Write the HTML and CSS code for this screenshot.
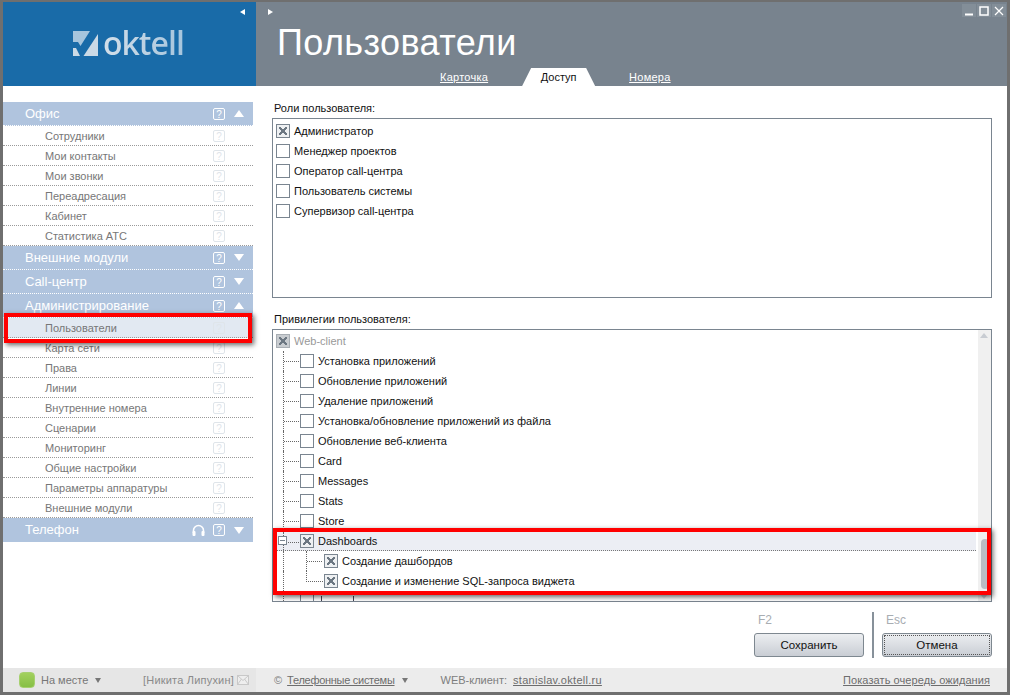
FILE: index.html
```html
<!DOCTYPE html>
<html lang="ru">
<head>
<meta charset="utf-8">
<title>Oktell</title>
<link rel="stylesheet" href="styles.css">
</head>
<body>
<div class="window">
  <div class="columns">
    <aside class="side">
      <div class="brand">
        <span class="collapse-left"></span>
        <div class="logo">
          <svg class="logo-mark" width="25" height="25" viewBox="0 0 25 25">
            <path d="M0 0H17L7.5 15L5 11H0Z" fill="#a6c5dd"/>
            <path d="M25 3V25H10.5Z" fill="#cbdae6"/>
            <path d="M0 17H3L7 25H0Z" fill="#cbdae6"/>
          </svg>
          <span class="logo-text">oktell</span>
        </div>
      </div>
      <nav class="menu">
        <div class="group"><span class="group-name">Офис</span><span class="q">?</span><span class="tri up"></span></div>
        <div class="item"><span class="item-name">Сотрудники</span><span class="q">?</span></div>
        <div class="item"><span class="item-name">Мои контакты</span><span class="q">?</span></div>
        <div class="item"><span class="item-name">Мои звонки</span><span class="q">?</span></div>
        <div class="item"><span class="item-name">Переадресация</span><span class="q">?</span></div>
        <div class="item"><span class="item-name">Кабинет</span><span class="q">?</span></div>
        <div class="item"><span class="item-name">Статистика АТС</span><span class="q">?</span></div>
        <div class="group"><span class="group-name">Внешние модули</span><span class="q">?</span><span class="tri down"></span></div>
        <div class="group"><span class="group-name">Call-центр</span><span class="q">?</span><span class="tri down"></span></div>
        <div class="group"><span class="group-name">Администрирование</span><span class="q">?</span><span class="tri up"></span></div>
        <div class="item active"><span class="item-name">Пользователи</span><span class="q">?</span></div>
        <div class="item"><span class="item-name">Карта сети</span><span class="q">?</span></div>
        <div class="item"><span class="item-name">Права</span><span class="q">?</span></div>
        <div class="item"><span class="item-name">Линии</span><span class="q">?</span></div>
        <div class="item"><span class="item-name">Внутренние номера</span><span class="q">?</span></div>
        <div class="item"><span class="item-name">Сценарии</span><span class="q">?</span></div>
        <div class="item"><span class="item-name">Мониторинг</span><span class="q">?</span></div>
        <div class="item"><span class="item-name">Общие настройки</span><span class="q">?</span></div>
        <div class="item"><span class="item-name">Параметры аппаратуры</span><span class="q">?</span></div>
        <div class="item"><span class="item-name">Внешние модули</span><span class="q">?</span></div>
        <div class="group last"><span class="group-name">Телефон</span>
          <svg class="headset" width="13" height="13" viewBox="0 0 13 13"><path d="M1.5 9V6.5a5 5 0 0 1 10 0V9" fill="none" stroke="#fff" stroke-width="1.6"/><rect x="0.5" y="7" width="3" height="5" rx="1" fill="#fff"/><rect x="9.5" y="7" width="3" height="5" rx="1" fill="#fff"/></svg>
          <span class="q">?</span><span class="tri down"></span></div>
      </nav>
      <div class="side-foot">
        <span class="status-dot"></span>
        <span class="status-name">На месте</span><span class="mini-tri"></span>
        <span class="user">[Никита Липухин]</span>
        <svg class="mail" width="12" height="10" viewBox="0 0 12 10"><rect x="0.5" y="0.5" width="11" height="9" fill="#eee" stroke="#c8c8c8"/><path d="M0.5 0.5L6 5.5L11.5 0.5M0.5 9.5L4.5 4M11.5 9.5L7.5 4" fill="none" stroke="#c8c8c8"/></svg>
      </div>
    </aside>
    <main class="main">
      <header class="head">
        <span class="collapse-right"></span>
        <div class="win-btns">
          <span class="win-btn"><svg width="12" height="12" viewBox="0 0 12 12"><path d="M2 9.5H10" stroke="#fff" stroke-width="2"/></svg></span>
          <span class="win-btn"><svg width="12" height="12" viewBox="0 0 12 12"><rect x="2" y="2" width="8" height="8" fill="none" stroke="#fff" stroke-width="1.5"/></svg></span>
          <span class="win-btn"><svg width="12" height="12" viewBox="0 0 12 12"><path d="M2 2L10 10M10 2L2 10" stroke="#fff" stroke-width="1.2"/></svg></span>
        </div>
        <h1 class="title">Пользователи</h1>
        <div class="tabs">
          <a class="tab">Карточка</a>
          <span class="tab current">Доступ</span>
          <a class="tab">Номера</a>
        </div>
      </header>
      <section class="content">
        <div class="label">Роли пользователя:</div>
        <div class="box roles">
          <div class="row"><span class="cb on"></span>Администратор</div>
          <div class="row"><span class="cb"></span>Менеджер проектов</div>
          <div class="row"><span class="cb"></span>Оператор call-центра</div>
          <div class="row"><span class="cb"></span>Пользователь системы</div>
          <div class="row"><span class="cb"></span>Супервизор call-центра</div>
        </div>
        <div class="label second">Привилегии пользователя:</div>
        <div class="box privs">
          <div class="tree">
            <div class="row root"><span class="cb on dim"></span>Web-client</div>
            <div class="row lvl1"><span class="cb"></span>Установка приложений</div>
            <div class="row lvl1"><span class="cb"></span>Обновление приложений</div>
            <div class="row lvl1"><span class="cb"></span>Удаление приложений</div>
            <div class="row lvl1"><span class="cb"></span>Установка/обновление приложений из файла</div>
            <div class="row lvl1"><span class="cb"></span>Обновление веб-клиента</div>
            <div class="row lvl1"><span class="cb"></span>Card</div>
            <div class="row lvl1"><span class="cb"></span>Messages</div>
            <div class="row lvl1"><span class="cb"></span>Stats</div>
            <div class="row lvl1"><span class="cb"></span>Store</div>
            <div class="row lvl1 selected"><span class="expander"></span><span class="cb on"></span>Dashboards</div>
            <div class="row lvl2"><span class="cb on"></span>Создание дашбордов</div>
            <div class="row lvl2 end"><span class="cb on"></span>Создание и изменение SQL-запроса виджета</div>
            <div class="row lvl1 clipped"><span class="cb"></span><span class="stem first"></span><span class="stem"></span></div>
          </div>
          <div class="scrollbar">
            <span class="arrow-up"></span>
            <span class="thumb"></span>
            <span class="arrow-down"></span>
          </div>
        </div>
        <div class="actions">
          <div class="action"><span class="key">F2</span><button class="btn">Сохранить</button></div>
          <span class="divider"></span>
          <div class="action"><span class="key">Esc</span><button class="btn focus">Отмена</button></div>
        </div>
      </section>
      <footer class="main-foot">
        <span class="copy">©</span>
        <a class="foot-link company">Телефонные системы</a><span class="mini-tri"></span>
        <span class="client">WEB-клиент:</span>
        <a class="foot-link host">stanislav.oktell.ru</a>
        <a class="foot-link queue">Показать очередь ожидания</a>
      </footer>
    </main>
  </div>
  <div class="mark mark-user"></div>
  <div class="mark mark-dash"></div>
</div>
</body>
</html>
```

FILE: styles.css
```css
* { box-sizing: border-box; }
html, body { margin: 0; height: 100%; }
body {
  width: 1010px;
  height: 695px;
  overflow: hidden;
  background: #fff;
  font: 11px/20px "Liberation Sans", Arial, sans-serif;
  color: #111;
}
.window {
  position: relative;
  width: 1010px;
  height: 695px;
  border: solid #6f6f6f;
  border-width: 2px 3px 3px 3px;
  background: #fff;
}
.columns { display: flex; height: 100%; }

/* sidebar */
.side { width: 253px; display: flex; flex-direction: column; }
.brand {
  position: relative;
  height: 84px;
  background: #196ba8;
  display: flex;
  padding: 29px 0 0 70px;
}
.collapse-left, .collapse-right {
  position: absolute;
  top: 7px;
  width: 0;
  height: 0;
  border-style: solid;
  border-color: transparent;
  border-width: 3.5px 0;
}
.collapse-left { right: 11px; border-right: 5px solid #fff; }
.collapse-right { left: 12px; border-left: 5px solid #fff; }
.logo { display: flex; align-items: center; height: 25px; gap: 5px; }
.logo-mark { flex: none; }
.logo-text {
  font: 600 32px/25px "Open Sans", sans-serif;
  letter-spacing: -1px;
  background: linear-gradient(90deg, #d3dfe9, #a6c5dd);
  -webkit-background-clip: text;
  background-clip: text;
  color: transparent;
  padding-bottom: 2px;
}
.menu { flex: 1; padding-top: 16px; width: 250px; }
.group, .item {
  display: flex;
  align-items: center;
  padding-right: 9px;
}
.group {
  height: 24px;
  background: #b0c4de;
  color: #fff;
  font-size: 13px;
  padding-left: 22px;
  border-bottom: 1px dotted #fff;
}
.group.last { border-bottom: 0; }
.group-name { flex: 1; }
.item {
  height: 20px;
  padding-left: 42px;
  color: #777;
  border-bottom: 1px dotted #9a9a9a;
  padding-right: 28px;
}
.item.active { background: #e2e9f2; }
.item-name { flex: 1; }
.q {
  width: 12px;
  height: 12px;
  border: 1px solid #fff;
  border-radius: 2px;
  color: #fff;
  font: 10px/11px "Liberation Sans", sans-serif;
  text-align: center;
}
.item .q { border-color: #dfe5ea; color: #dfe5ea; }
.tri {
  width: 0;
  height: 0;
  margin-left: 9px;
  border-style: solid;
  border-color: transparent;
  border-width: 0 5px;
}
.tri.up { border-bottom: 7px solid #fff; }
.tri.down { border-top: 7px solid #fff; }
.headset { margin-right: 8px; }
.side-foot {
  height: 24px;
  background: #e6e6e6;
  display: flex;
  align-items: center;
  padding-left: 16px;
  color: #777;
}
.status-dot {
  width: 16px;
  height: 16px;
  border-radius: 4px;
  background: linear-gradient(#a2d05e, #86bf45);
  border: 1px solid #a6d06f;
  margin-right: 6px;
}
.mini-tri {
  width: 0;
  height: 0;
  margin-left: 7px;
  border-style: solid;
  border-color: #777 transparent transparent;
  border-width: 5px 3px 0;
}
.user { margin-left: auto; margin-right: 3px; color: #8a8a8a; letter-spacing: 0.2px; }
.mail { margin-right: 7px; }

/* main */
.main { flex: 1; display: flex; flex-direction: column; min-width: 0; }
.head {
  position: relative;
  height: 84px;
  background: #78838e;
  padding-left: 21px;
  color: #fff;
}
.win-btns { position: absolute; right: 1px; top: 2px; display: flex; gap: 1px; }
.win-btn {
  width: 14px;
  height: 13px;
  background: #838e98;
  display: flex;
  align-items: center;
  justify-content: center;
}
.title {
  margin: 0;
  padding-top: 19px;
  font: 36px/44px "Liberation Sans", sans-serif;
  letter-spacing: 0.4px;
}
.tabs {
  position: absolute;
  left: 184px;
  bottom: 0;
  display: flex;
  align-items: flex-end;
}
.tab {
  color: #fff;
  line-height: 18px;
  text-decoration: underline;
  font-size: 11px;
  letter-spacing: 0.25px;
}
.tab.current {
  color: #111;
  background: #fff;
  text-decoration: none;
  width: 73px;
  text-align: center;
  margin: 0 34px;
  letter-spacing: 0;
  clip-path: polygon(9px 0, 64px 0, 100% 100%, 0 100%);
}
.content { flex: 1; padding: 12px 15px 0 18px; position: relative; }
.label { height: 20px; line-height: 20px; }
.label.second { margin-top: 11px; height: 20px; }
.box { border: 1px solid #7a8590; margin-left: -2px; background: #fff; }
.roles { height: 180px; padding: 2px 3px; }
.row { height: 20px; display: flex; align-items: center; position: relative; color: #111; }
.cb {
  flex: none;
  width: 14px;
  height: 14px;
  border: 1px solid #7a8590;
  margin-right: 4px;
  background: #fff;
}
.cb.on {
  background:
    linear-gradient(45deg, transparent 38%, #6c7782 38%, #6c7782 62%, transparent 62%) center/8px 8px no-repeat,
    linear-gradient(-45deg, transparent 38%, #6c7782 38%, #6c7782 62%, transparent 62%) center/8px 8px no-repeat,
    #eef0f2;
}
.cb.dim { background-color: #c8ccd0; border-color: #a8aeb4; }
.privs { height: 273px; position: relative; overflow: hidden; }
.tree { padding: 1px 3px 2px; }
.root { color: #999; }
.lvl1 { padding-left: 24px; }
.lvl2 { padding-left: 48px; }
.lvl1::before {
  content: "";
  position: absolute;
  left: 7px;
  top: 0;
  height: 20px;
  width: 16px;
  border-left: 1px dotted #666;
  background: linear-gradient(90deg, #666 1px, transparent 1px) 0 10px/2px 1px repeat-x;
}
.lvl2::before {
  content: "";
  position: absolute;
  left: 7px;
  top: 0;
  height: 20px;
  border-left: 1px dotted #666;
}
.lvl2::after {
  content: "";
  position: absolute;
  left: 30px;
  top: 0;
  height: 10px;
  width: 16px;
  border-left: 1px dotted #666;
  border-bottom: 1px dotted #666;
}
.lvl2:not(.end)::after { height: 20px; border-bottom: 0; background: linear-gradient(90deg, #666 1px, transparent 1px) 0 10px/2px 1px repeat-x; }
.clipped { align-items: flex-start; padding-top: 3px; }
.stem { width: 1px; height: 6px; background: #445; margin-left: 31px; margin-top: 2px; }
.stem.first { margin-left: 3px; }
.selected {
  background: #eceef4;
  border-top: 1px dotted #777;
  border-bottom: 1px dotted #777;
  margin-right: 12px;
}
.expander {
  position: absolute;
  left: 2px;
  top: 4px;
  z-index: 1;
  width: 9px;
  height: 9px;
  border: 1px solid #7a8590;
  background: linear-gradient(#7a8590, #7a8590) center/5px 1px no-repeat, #fff;
}
.scrollbar {
  position: absolute;
  right: 0;
  top: 0;
  bottom: 0;
  width: 13px;
  background: #f0f0f0;
}
.thumb {
  position: absolute;
  left: 3px;
  top: 209px;
  width: 8px;
  height: 50px;
  border-radius: 4px;
  background: #b9bdc4;
}
.arrow-up, .arrow-down {
  position: absolute;
  left: 2px;
  width: 0;
  height: 0;
  border-style: solid;
  border-color: transparent;
  border-width: 0 4.5px;
}
.arrow-up { top: 3px; border-bottom: 5px solid #c8ccd2; }
.arrow-down { bottom: 2px; border-top: 5px solid #c8ccd2; }
.actions {
  display: flex;
  justify-content: flex-end;
  margin-top: 10px;
}
.action { width: 110px; display: flex; flex-direction: column; }
.key { height: 21px; line-height: 17px; color: #a8adb2; font-size: 12px; padding-left: 4px; }
.divider { width: 2px; height: 46px; background: #87919a; margin: 0 8px; }
.btn {
  width: 110px;
  height: 24px;
  border: 1px solid #7e8890;
  border-radius: 3px;
  background: linear-gradient(#eceef1, #c9cdd4);
  font: 11.5px "Liberation Sans", sans-serif;
  color: #111;
  padding: 0;
}
.btn.focus { outline: 1px dotted #555; outline-offset: -3px; }
.main-foot {
  height: 24px;
  background: #ececec;
  display: flex;
  align-items: center;
  padding-left: 18px;
  color: #7d7d7d;
}
.copy { margin-right: 5px; }
.foot-link { color: #6d6d6d; text-decoration: underline; }
.company { letter-spacing: -0.28px; }
.host { letter-spacing: 0.28px; }
.client { margin-left: 33px; margin-right: 6px; color: #7d7d7d; }
.queue { margin-left: auto; margin-right: 17px; letter-spacing: 0.08px; }

/* red callouts, drawn over the window */
.mark {
  position: absolute;
  border: 4px solid #f00;
  box-shadow: 2px 2px 5px rgba(0, 0, 0, 0.6);
}
.mark-user { left: 1px; top: 311px; width: 248px; height: 30px; }
.mark-dash { left: 270px; top: 526px; width: 718px; height: 67px; }
```
